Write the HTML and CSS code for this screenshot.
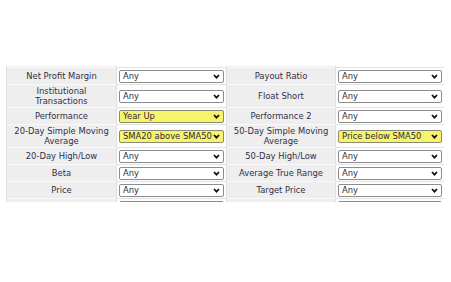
FILE: index.html
```html
<!DOCTYPE html>
<html lang="en">
  <head>
    <meta charset="UTF-8" />
    <meta name="viewport" content="width=device-width, initial-scale=1.0" />
    <title>Screener Filters</title>
    <link rel="stylesheet" href="styles.css">
  </head>
  <body>
    <div class="screen">
      <div class="filters">
        <div class="filter-grid">
          <!-- row above, scrolled mostly out of view -->
          <div class="label"></div>
          <div class="cell"><div class="select"></div></div>
          <div class="label"></div>
          <div class="cell"><div class="select"></div></div>

          <div class="label">Net Profit Margin</div>
          <div class="cell"><div class="select"><span>Any</span><svg viewBox="0 0 7 5"><path d="M1 1 L3.5 3.6 L6 1" /></svg></div></div>
          <div class="label">Payout Ratio</div>
          <div class="cell"><div class="select"><span>Any</span><svg viewBox="0 0 7 5"><path d="M1 1 L3.5 3.6 L6 1" /></svg></div></div>

          <div class="label">Institutional<br />Transactions</div>
          <div class="cell"><div class="select"><span>Any</span><svg viewBox="0 0 7 5"><path d="M1 1 L3.5 3.6 L6 1" /></svg></div></div>
          <div class="label">Float Short</div>
          <div class="cell"><div class="select"><span>Any</span><svg viewBox="0 0 7 5"><path d="M1 1 L3.5 3.6 L6 1" /></svg></div></div>

          <div class="label">Performance</div>
          <div class="cell"><div class="select active"><span>Year Up</span><svg viewBox="0 0 7 5"><path d="M1 1 L3.5 3.6 L6 1" /></svg></div></div>
          <div class="label">Performance 2</div>
          <div class="cell"><div class="select"><span>Any</span><svg viewBox="0 0 7 5"><path d="M1 1 L3.5 3.6 L6 1" /></svg></div></div>

          <div class="label">20-Day Simple Moving<br />Average</div>
          <div class="cell"><div class="select active"><span>SMA20 above SMA50</span><svg viewBox="0 0 7 5"><path d="M1 1 L3.5 3.6 L6 1" /></svg></div></div>
          <div class="label">50-Day Simple Moving<br />Average</div>
          <div class="cell"><div class="select active"><span>Price below SMA50</span><svg viewBox="0 0 7 5"><path d="M1 1 L3.5 3.6 L6 1" /></svg></div></div>

          <div class="label">20-Day High/Low</div>
          <div class="cell"><div class="select"><span>Any</span><svg viewBox="0 0 7 5"><path d="M1 1 L3.5 3.6 L6 1" /></svg></div></div>
          <div class="label">50-Day High/Low</div>
          <div class="cell"><div class="select"><span>Any</span><svg viewBox="0 0 7 5"><path d="M1 1 L3.5 3.6 L6 1" /></svg></div></div>

          <div class="label">Beta</div>
          <div class="cell"><div class="select"><span>Any</span><svg viewBox="0 0 7 5"><path d="M1 1 L3.5 3.6 L6 1" /></svg></div></div>
          <div class="label">Average True Range</div>
          <div class="cell"><div class="select"><span>Any</span><svg viewBox="0 0 7 5"><path d="M1 1 L3.5 3.6 L6 1" /></svg></div></div>

          <div class="label">Price</div>
          <div class="cell"><div class="select"><span>Any</span><svg viewBox="0 0 7 5"><path d="M1 1 L3.5 3.6 L6 1" /></svg></div></div>
          <div class="label">Target Price</div>
          <div class="cell"><div class="select"><span>Any</span><svg viewBox="0 0 7 5"><path d="M1 1 L3.5 3.6 L6 1" /></svg></div></div>

          <!-- row below, cut by the panel edge -->
          <div class="label"></div>
          <div class="cell"><div class="select"></div></div>
          <div class="label"></div>
          <div class="cell"><div class="select"></div></div>
        </div>
      </div>
    </div>
  </body>
</html>
```

FILE: styles.css
```css
body {
  margin: 0;
  background-color: #ffffff;
  font-family: "DejaVu Sans", Verdana, sans-serif;
  color: #333;
}

.screen {
  padding: 66px 7px 0 6px;
}

.filters {
  height: 136px;
  overflow: hidden;
}

.filter-grid {
  display: grid;
  grid-template-columns: 109px 111px 108px 110px;
  margin-top: -15px;
  border-left: 1px solid #e2e2e2;
  border-right: 1px solid #d6d6d6;
}

.label,
.cell {
  box-sizing: border-box;
  min-height: 17px;
  padding: 1px 2px;
  display: flex;
  align-items: center;
  font-size: 8.4px;
  line-height: 10px;
}

.label {
  justify-content: center;
  text-align: center;
  background-color: #eeeeee;
  color: #2f2f48;
  border-bottom: 1px solid #fafafa;
}

.cell {
  background-color: #fdfdfd;
  border-bottom: 1px solid #e3e3e3;
  border-left: 1px solid #e0e0e0;
  border-right: 1px solid #e0e0e0;
}

.select {
  box-sizing: border-box;
  width: 100%;
  height: 13px;
  display: flex;
  align-items: center;
  padding: 0 3px 0 3px;
  background-color: #ffffff;
  border: 1px solid #8c8c8c;
  border-radius: 2px;
}

.select span {
  flex: 1;
  min-width: 0;
  overflow: hidden;
  white-space: nowrap;
  color: #2b2b3a;
}

.select svg {
  flex-shrink: 0;
  width: 7px;
  height: 5px;
}

.select path {
  fill: none;
  stroke: #111111;
  stroke-width: 1.8;
}

.select.active {
  background-color: #f8f36c;
  border-color: #8a8a70;
}
```
